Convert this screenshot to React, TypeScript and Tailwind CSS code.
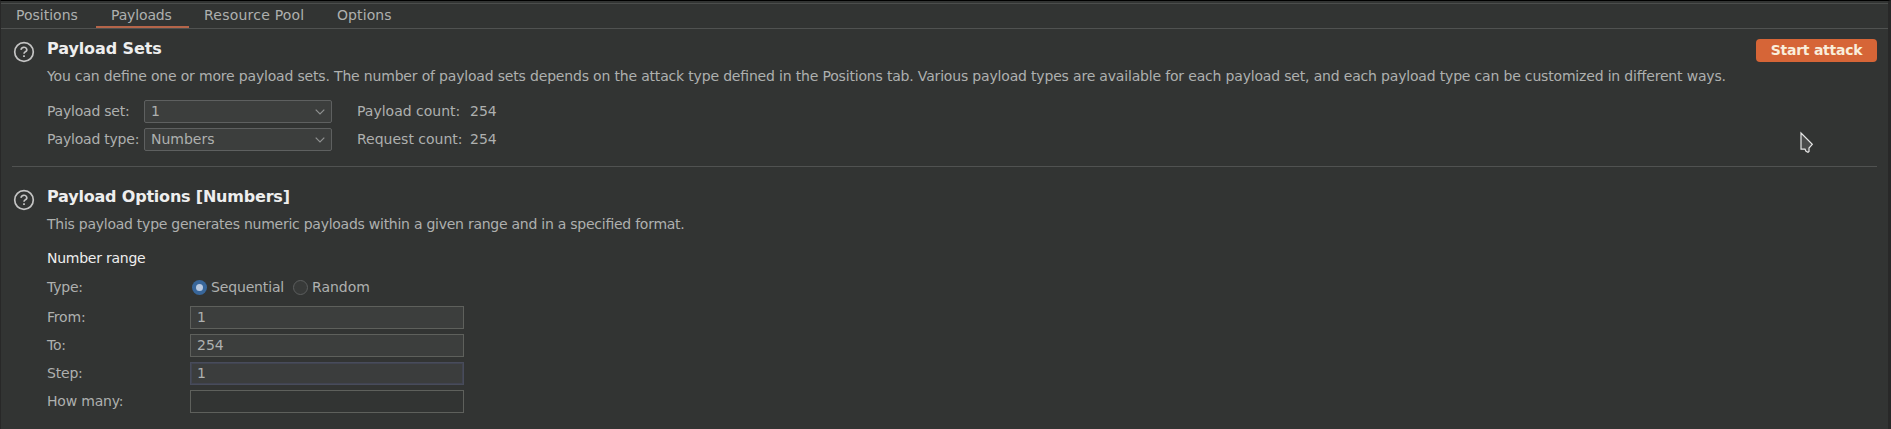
import type { ReactNode } from "react";

function HelpIcon() {
  return (
    <svg width="22" height="22" viewBox="0 0 22 22" fill="none" className="block shrink-0">
      <circle cx="11" cy="11" r="9.3" stroke="#c4c4c4" strokeWidth="1.7" />
      <path d="M8.2 8.9a2.8 2.4 0 1 1 4.2 1.9c-.9.5-1.4.9-1.4 2" stroke="#c4c4c4" strokeWidth="1.6" />
      <rect x="10.1" y="14.3" width="1.8" height="1.7" fill="#c4c4c4" />
    </svg>
  );
}

function Tab({ label, width, active }: { label: string; width: string; active?: boolean }) {
  return (
    <div className={`relative flex h-6 shrink-0 justify-start leading-[23px] ${width}`}>
      {label}
      {active && <div className="absolute bottom-0 left-0 h-[2px] w-full bg-[#b5654a]" />}
    </div>
  );
}

function Select({ value }: { value: string }) {
  return (
    <div className="flex h-[23px] w-[188px] items-center justify-between rounded-[2px] border border-[#5e6060] bg-[#3c3e3d] pr-[6px] pl-[6px] leading-[21px] tracking-normal">
      <span>{value}</span>
      <svg width="10" height="6" viewBox="0 0 10 6" fill="none">
        <path d="M0.7 0.7 5 5 9.3 0.7" stroke="#8f9191" strokeWidth="1.2" />
      </svg>
    </div>
  );
}

function Row({ label, children }: { label: string; children: ReactNode }) {
  return (
    <div className="flex h-[23px] items-center">
      <div className="w-[143px] leading-[21px] tracking-[-0.2px]">{label}</div>
      {children}
    </div>
  );
}

function Field({ value, tone }: { value: string; tone: string }) {
  return <div className={`h-[23px] w-[274px] border pl-[6px] leading-[21px] ${tone}`}>{value}</div>;
}

function Radio({ checked }: { checked?: boolean }) {
  return checked ? (
    <div className="flex size-[15px] items-center justify-center rounded-full bg-[#38669a]">
      <div className="size-[7px] rounded-full bg-[#b9c9e0]" />
    </div>
  ) : (
    <div className="size-[15px] rounded-full border border-[#5c5e5e] bg-[#383a39]" />
  );
}

export default function App() {
  return (
    <div className="relative h-[429px] w-full overflow-hidden border-t border-r-[3px] border-l border-t-black border-r-[#282828] border-l-[#282828] bg-[#323433] font-['DejaVu_Sans',sans-serif] text-[14px] whitespace-nowrap text-[#aeb0af]">
      <div className="flex h-[28px] border-b border-[#505251] pt-[2px]">
        <div className="absolute top-[2px] left-0 h-px w-full bg-[#4b4d4c]" />
        <div className="flex pt-px">
          <Tab label="Positions" width="w-[95px] pl-[15px]" />
          <Tab label="Payloads" width="w-[93px] pl-[15px] tracking-[-0.15px]" active />
          <Tab label="Resource Pool" width="w-[131px] pl-[15px] tracking-[0.22px]" />
          <Tab label="Options" width="w-[87px] pl-[17px] tracking-[0.1px]" />
        </div>
      </div>

      <section className="flex h-[137px] pt-[10px] pr-[11px] pl-[12px]">
        <div className="pt-[2px]"><HelpIcon /></div>
        <div className="flex-1 pl-[12px]">
          <div className="flex h-[27px] justify-between">
            <h2 className="text-[16px] leading-[20px] font-bold tracking-[-0.1px] text-[#eeeeee]">Payload Sets</h2>
            <button className="flex h-[23px] w-[121px] justify-center rounded-[4px] bg-[#d66537] text-[14px] leading-[23px] font-bold tracking-[-0.25px] text-[#f9eedb]">
              Start attack
            </button>
          </div>
          <p className="leading-[20px] tracking-[-0.178px] [font-feature-settings:'liga'_1]">
            You can define one or more payload sets. The number of payload sets depends on the attack type defined in the Positions tab. Various payload types are available for each payload set, and each payload type can be customized in different ways.
          </p>
          <div className="mt-[14px] flex flex-col gap-[5px]">
            <div className="flex h-[23px] leading-[22px]">
              <div className="w-[97px] tracking-[-0.22px]">Payload set:</div>
              <Select value="1" />
              <div className="box-content w-[113px] pl-[25px]">Payload count:</div>
              <div>254</div>
            </div>
            <div className="flex h-[23px] leading-[22px]">
              <div className="w-[97px] tracking-[-0.22px]">Payload type:</div>
              <Select value="Numbers" />
              <div className="box-content w-[113px] pl-[25px]">Request count:</div>
              <div>254</div>
            </div>
          </div>
        </div>
      </section>

      <div className="mr-[11px] ml-[11px] h-px bg-[#505251]" />

      <section className="flex pt-[20px] pl-[12px]">
        <div className="pt-[2px]"><HelpIcon /></div>
        <div className="pl-[12px]">
          <h2 className="h-[27px] text-[16px] leading-[20px] font-bold tracking-[-0.2px] text-[#eeeeee]">Payload Options [Numbers]</h2>
          <p className="leading-[20px] tracking-[-0.255px] [font-feature-settings:'liga'_1]">
            This payload type generates numeric payloads within a given range and in a specified format.
          </p>
          <h3 className="mt-[14px] leading-[20px] tracking-[-0.25px] text-[#eeeeee]">Number range</h3>
          <div className="mt-[8px] flex flex-col gap-[5px]">
            <Row label="Type:">
              <div className="flex items-center pl-[2px]">
                <Radio checked />
                <span className="w-[86px] pl-[4px] tracking-[-0.15px]">Sequential</span>
                <Radio />
                <span className="pl-[4px]">Random</span>
              </div>
            </Row>
            <div className="mt-[2px] flex flex-col gap-[5px]">
              <Row label="From:"><Field value="1" tone="border-[#5e605c] bg-[#3c3e3d]" /></Row>
              <Row label="To:"><Field value="254" tone="border-[#5e605c] bg-[#3c3e3d]" /></Row>
              <Row label="Step:"><Field value="1" tone="border-[#484c5b] bg-[#3b3d3d] inset-ring inset-ring-[#414451]" /></Row>
              <Row label="How many:"><Field value="" tone="border-[#5e605c] bg-[#323433]" /></Row>
            </div>
          </div>
        </div>
      </section>

      <svg className="absolute top-[130px] left-[1799px]" width="15" height="24" viewBox="0 0 15 24">
        <path d="M1 2V18.2H5L6 20.3 8 21.2 9 20.5V17L12.3 13.3Z" fill="#4a4b4b" stroke="#e6e6e6" strokeWidth="1.2" />
      </svg>
    </div>
  );
}
